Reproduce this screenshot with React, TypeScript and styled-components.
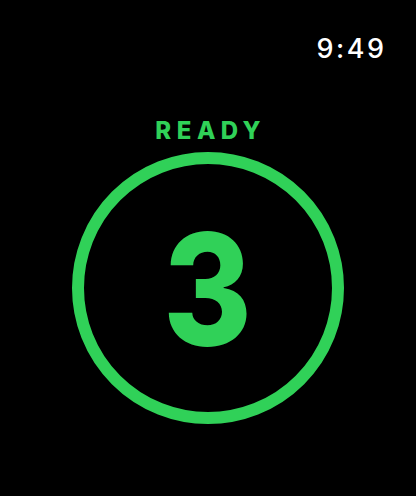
import React from 'react';
import { styled, createGlobalStyle } from 'styled-components';

const GlobalStyle = createGlobalStyle`
  html, body {
    margin: 0;
    padding: 0;
    background: #000;
  }
`

const Screen = styled.div`
  width: 416px;
  height: 496px;
  background: #000;
  display: flex;
  flex-direction: column;
  align-items: center;
  font-family: Inter, "Noto Sans", sans-serif;
  overflow: hidden;
`

const StatusBar = styled.header`
  align-self: stretch;
  display: flex;
  justify-content: flex-end;
  padding: 34px 32px 0 0;
`

const Clock = styled.span`
  color: #fff;
  font-size: 27px;
  font-weight: 500;
  line-height: 30px;
  letter-spacing: 2.5px;
  margin-right: -2.5px;
`

const Label = styled.div`
  margin-top: 53px;
  color: #30d158;
  font-size: 24px;
  font-weight: 800;
  line-height: 28px;
  letter-spacing: 5.5px;
  padding-left: 5.5px;
`

const Ring = styled.div<{ $size: number; $stroke: number }>`
  margin-top: 7px;
  width: ${props => props.$size}px;
  height: ${props => props.$size}px;
  box-sizing: border-box;
  border: ${props => props.$stroke}px solid #30d158;
  border-radius: 50%;
  display: flex;
  align-items: center;
  justify-content: center;
`

const Count = styled.span`
  color: #30d158;
  font-size: 154px;
  font-weight: 800;
  line-height: 1;
  margin-top: 2px;
  transform: scaleX(0.88);
`

const App = () => {
  return (
    <>
      <GlobalStyle />
      <Screen>
        <StatusBar>
          <Clock>9:49</Clock>
        </StatusBar>
        <Label>READY</Label>
        <Ring $size={272} $stroke={12}>
          <Count>3</Count>
        </Ring>
      </Screen>
    </>
  );
};

export default App;
